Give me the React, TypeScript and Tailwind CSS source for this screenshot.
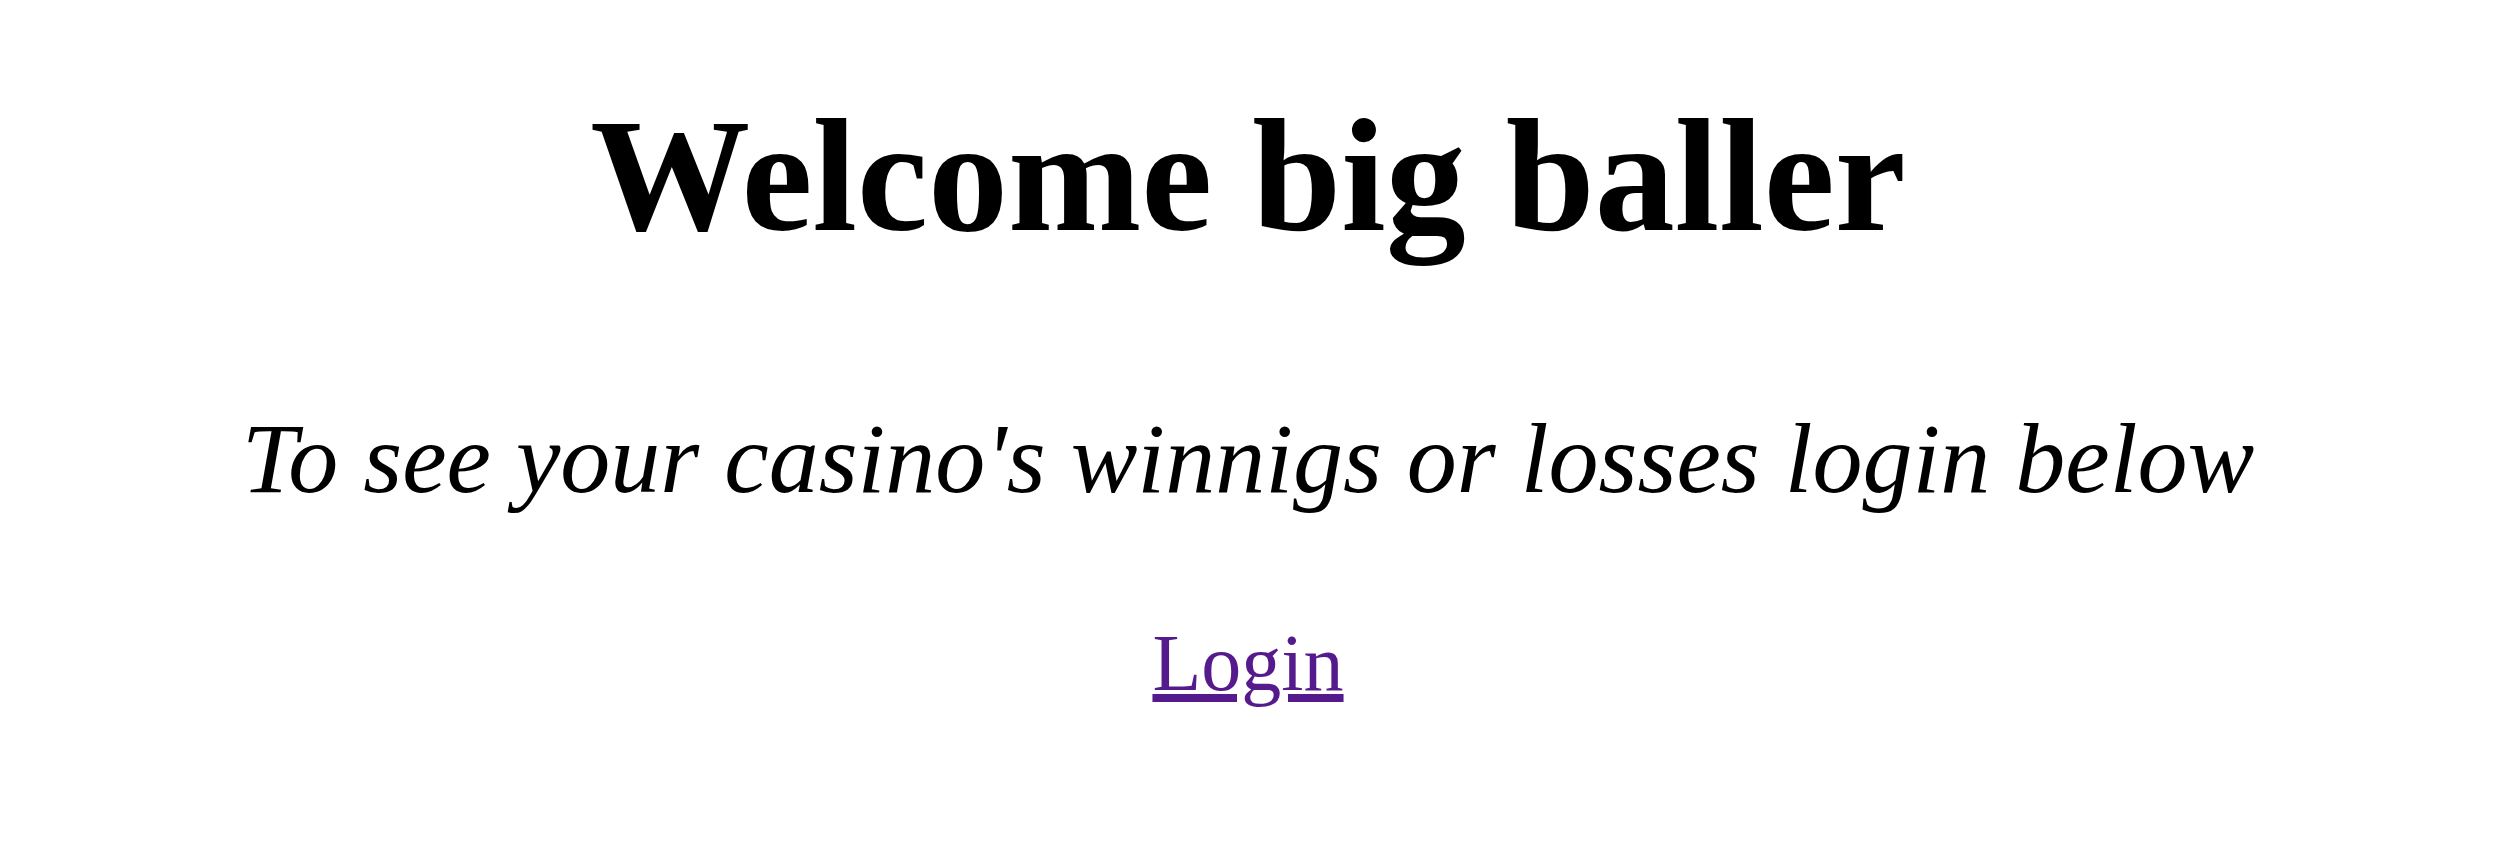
import React from 'react';

const App: React.FC = () => {
  return (
    <div className="min-h-screen bg-white text-black font-['Liberation_Serif','Times_New_Roman',serif] text-center">
      <div className="flex flex-col items-center pt-[84px]">
        <h1 className="text-[160px] font-bold leading-[normal]">Welcome big baller</h1>
        <h3 className="mt-[132px] text-[100px] italic leading-[normal]">
          To see your casino's winnigs or losses login below
        </h3>
        <p className="mt-[102px] text-[80px] leading-[normal]">
          <a href="#login" className="text-[#551a8b] underline">
            Login
          </a>
        </p>
      </div>
    </div>
  );
};

export default App;
